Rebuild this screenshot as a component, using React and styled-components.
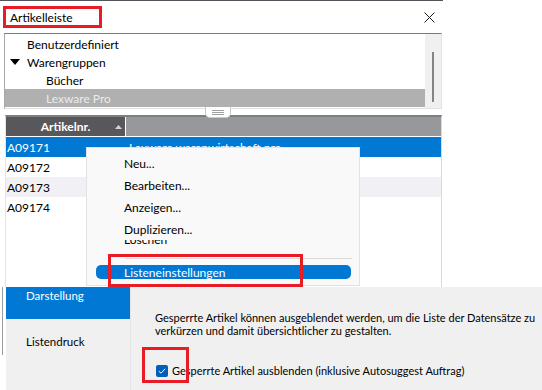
import styled, { createGlobalStyle } from "styled-components";

const GlobalStyle = createGlobalStyle`
  html, body {
    margin: 0;
    padding: 0;
    background: #ffffff;
  }
  body {
    font-family: Lato, "Noto Sans", sans-serif;
    font-size: 12px;
    color: #000000;
  }
  * {
    box-sizing: border-box;
  }
`;

const Screen = styled.div`
  position: relative;
  width: 542px;
  height: 390px;
  overflow: hidden;
  background: #ffffff;
`;

const TopWindow = styled.div`
  width: 443px;
  height: 287px;
  border-top: 1px solid #50555c;
  display: flex;
  flex-direction: column;
  overflow: hidden;
`;

const TitleBar = styled.div`
  height: 32px;
  flex-shrink: 0;
  display: flex;
  align-items: center;
  justify-content: space-between;
  padding: 0 8px 0 10px;
`;

const Title = styled.span`
  font-size: 12px;
`;

const TreePanel = styled.div`
  height: 76px;
  flex-shrink: 0;
  margin: 0 1px 0 4px;
  display: flex;
  border-top: 1px solid #7a7a7a;
  border-left: 1px solid #a8a8a8;
  border-right: 1px solid #e2e2e2;
  border-bottom: 1px solid #e2e2e2;
`;

const TreeList = styled.div`
  flex: 1;
  padding-top: 1px;
`;

const TreeRow = styled.div`
  height: 18px;
  display: flex;
  align-items: center;
  padding-left: ${(p) => p.$indent}px;
  background: ${(p) => (p.$selected ? "#b0b0b0" : "transparent")};
  color: ${(p) => (p.$selected ? "#ebebeb" : "#000000")};
`;

const Caret = styled.svg`
  width: 10px;
  height: 6px;
  margin: 0 7px 0 -17px;
`;

const ScrollTrack = styled.div`
  width: 16px;
  background: #f0f0f0;
  display: flex;
  justify-content: center;
  padding-top: 18px;
`;

const ScrollThumb = styled.div`
  width: 2px;
  height: 50px;
  background: #858585;
`;

const Splitter = styled.div`
  height: 6px;
  flex-shrink: 0;
  display: flex;
  justify-content: center;
  position: relative;
  z-index: 2;
`;

const Grip = styled.div`
  width: 26px;
  height: 11px;
  margin: -2px 7px 0 0;
  background: #ffffff;
  border: 1px solid #c9c9c9;
  border-top: none;
  border-radius: 0 0 5px 5px;
  display: flex;
  flex-direction: column;
  align-items: center;
  justify-content: center;
  gap: 1px;
`;

const GripLine = styled.div`
  width: 12px;
  height: 1px;
  background: #a0a0a0;
`;

const ListPanel = styled.div`
  flex: 1;
  margin: 0 1px 0 5px;
  border-top: 2px solid #7d7d7d;
  border-right: 1px solid #dadada;
  border-left: 1px solid #e4e4e4;
  background: #ffffff;
`;

const HeaderRow = styled.div`
  height: 20px;
  display: flex;
  background: #97989c;
  border-bottom: 1px solid #ffffff;
`;

const HeaderCell = styled.div`
  width: 120px;
  background: #58585c;
  border-right: 1px solid #ffffff;
  color: #ffffff;
  font-weight: bold;
  display: flex;
  align-items: center;
  justify-content: center;
  position: relative;
`;

const SortMark = styled.svg`
  position: absolute;
  right: 3px;
  top: 8px;
  width: 7px;
  height: 4px;
`;

const DataRow = styled.div`
  height: 20px;
  display: flex;
  align-items: center;
  background: ${(p) => p.$bg};
  color: ${(p) => (p.$selected ? "#ffffff" : "#000000")};
`;

const IdCell = styled.div`
  width: 121px;
  padding-left: 1px;
`;

const NameCell = styled.div`
  flex: 1;
  padding-left: 2px;
`;

const ContextMenu = styled.div`
  position: absolute;
  left: 86px;
  top: 147px;
  width: 274px;
  height: 139px;
  background: #f9f9f9;
  border: 1px solid #e2e2e2;
  padding-top: 4px;
  z-index: 3;
`;

const MenuItem = styled.div`
  height: 22px;
  display: flex;
  align-items: center;
  padding-left: 37px;
  background: #f9f9f9;
`;

const ClippedItem = styled.div`
  height: 6px;
  overflow: hidden;
  padding-left: 37px;
`;

const ClippedText = styled.div`
  line-height: 14px;
  margin-top: -7px;
`;

const MenuSeparator = styled.div`
  height: 1px;
  margin: 12px 7px 0 38px;
  background: #dcdcdc;
`;

const MenuActive = styled.div`
  height: 14px;
  margin: 6px 8px 0 9px;
  border-radius: 5px;
  background: #0078d4;
  color: #ffffff;
  display: flex;
  align-items: center;
  padding-left: 28px;
`;

const BottomDialog = styled.div`
  height: 103px;
  display: flex;
  font-size: 11px;
`;

const Gutter = styled.div`
  width: 6px;
  flex-shrink: 0;
  display: flex;
  justify-content: center;
  padding-right: 1px;
`;

const GutterLine = styled.div`
  width: 1px;
  height: 68px;
  background: #9a9a9a;
`;

const Nav = styled.div`
  width: 124px;
  flex-shrink: 0;
  background: #f0f0f0;
  display: flex;
  flex-direction: column;
  font-size: 11.5px;
`;

const NavItem = styled.div`
  height: ${(p) => p.$h}px;
  padding: ${(p) => p.$pt}px 0 0 20px;
  background: ${(p) => (p.$active ? "#0078d4" : "transparent")};
  color: ${(p) => (p.$active ? "#ffffff" : "#000000")};
`;

const Content = styled.div`
  flex: 1;
  min-width: 0;
  overflow: hidden;
  background: #f0f0f0;
  border-left: 1px solid #e4e4e4;
  padding: 24px 0 0 24px;
`;

const Paragraph = styled.p`
  margin: 0;
  line-height: 13px;
  white-space: nowrap;
`;

const CheckRow = styled.div`
  margin-top: 27px;
  display: flex;
  align-items: center;
  gap: 4px;
  padding-left: 1px;
`;

const CheckBox = styled.div`
  width: 12px;
  height: 12px;
  border-radius: 2px;
  background: #005fb8;
  display: flex;
  align-items: center;
  justify-content: center;
`;

const Highlight = styled.div`
  position: absolute;
  left: ${(p) => p.$x}px;
  top: ${(p) => p.$y}px;
  width: ${(p) => p.$w}px;
  height: ${(p) => p.$h}px;
  border: 3px solid #e81c24;
  z-index: 5;
`;

function App() {
  return (
    <>
      <GlobalStyle />
      <Screen>
        <TopWindow>
          <TitleBar>
            <Title>Artikelleiste</Title>
            <svg width="11" height="11" viewBox="0 0 11 11">
              <path d="M0.5 0.5 L10.5 10.5 M10.5 0.5 L0.5 10.5" stroke="#1a1a1a" strokeWidth="1" />
            </svg>
          </TitleBar>

          <TreePanel>
            <TreeList>
              <TreeRow $indent={22}>Benutzerdefiniert</TreeRow>
              <TreeRow $indent={22}>
                <Caret viewBox="0 0 10 6">
                  <path d="M0 0 H10 L5 6 Z" fill="#000" />
                </Caret>
                Warengruppen
              </TreeRow>
              <TreeRow $indent={41}>Bücher</TreeRow>
              <TreeRow $indent={41} $selected>
                Lexware Pro
              </TreeRow>
            </TreeList>
            <ScrollTrack>
              <ScrollThumb />
            </ScrollTrack>
          </TreePanel>

          <Splitter>
            <Grip>
              <GripLine />
              <GripLine />
              <GripLine />
            </Grip>
          </Splitter>

          <ListPanel>
            <HeaderRow>
              <HeaderCell>
                Artikelnr.
                <SortMark viewBox="0 0 7 4">
                  <path d="M0 4 L3.5 0 L7 4 Z" fill="#d4d4d4" />
                </SortMark>
              </HeaderCell>
            </HeaderRow>
            <DataRow $bg="#0078d4" $selected>
              <IdCell>A09171</IdCell>
              <NameCell>Lexware warenwirtschaft pro</NameCell>
            </DataRow>
            <DataRow $bg="#ffffff">
              <IdCell>A09172</IdCell>
            </DataRow>
            <DataRow $bg="#f0f0f5">
              <IdCell>A09173</IdCell>
            </DataRow>
            <DataRow $bg="#ffffff">
              <IdCell>A09174</IdCell>
            </DataRow>
          </ListPanel>
        </TopWindow>

        <ContextMenu>
          <MenuItem>Neu...</MenuItem>
          <MenuItem>Bearbeiten...</MenuItem>
          <MenuItem>Anzeigen...</MenuItem>
          <MenuItem>Duplizieren...</MenuItem>
          <ClippedItem>
            <ClippedText>Löschen</ClippedText>
          </ClippedItem>
          <MenuSeparator />
          <MenuActive>Listeneinstellungen</MenuActive>
        </ContextMenu>

        <BottomDialog>
          <Gutter>
            <GutterLine />
          </Gutter>
          <Nav>
            <NavItem $active $h={32} $pt={2}>
              Darstellung
            </NavItem>
            <NavItem $h={40} $pt={16}>
              Listendruck
            </NavItem>
          </Nav>
          <Content>
            <Paragraph>
              Gesperrte Artikel können ausgeblendet werden, um die Liste der Datensätze zu
            </Paragraph>
            <Paragraph>verkürzen und damit übersichtlicher zu gestalten.</Paragraph>
            <CheckRow>
              <CheckBox>
                <svg width="8" height="6" viewBox="0 0 8 6">
                  <path d="M0.8 3.2 L3 5.2 L7.2 0.8" stroke="#ffffff" strokeWidth="1" fill="none" />
                </svg>
              </CheckBox>
              Gesperrte Artikel ausblenden (inklusive Autosuggest Auftrag)
            </CheckRow>
          </Content>
        </BottomDialog>

        <Highlight $x={3} $y={6} $w={99} $h={22} />
        <Highlight $x={108} $y={254} $w={195} $h={33} />
        <Highlight $x={142} $y={347} $w={47} $h={36} />
      </Screen>
    </>
  );
}

export default App;
